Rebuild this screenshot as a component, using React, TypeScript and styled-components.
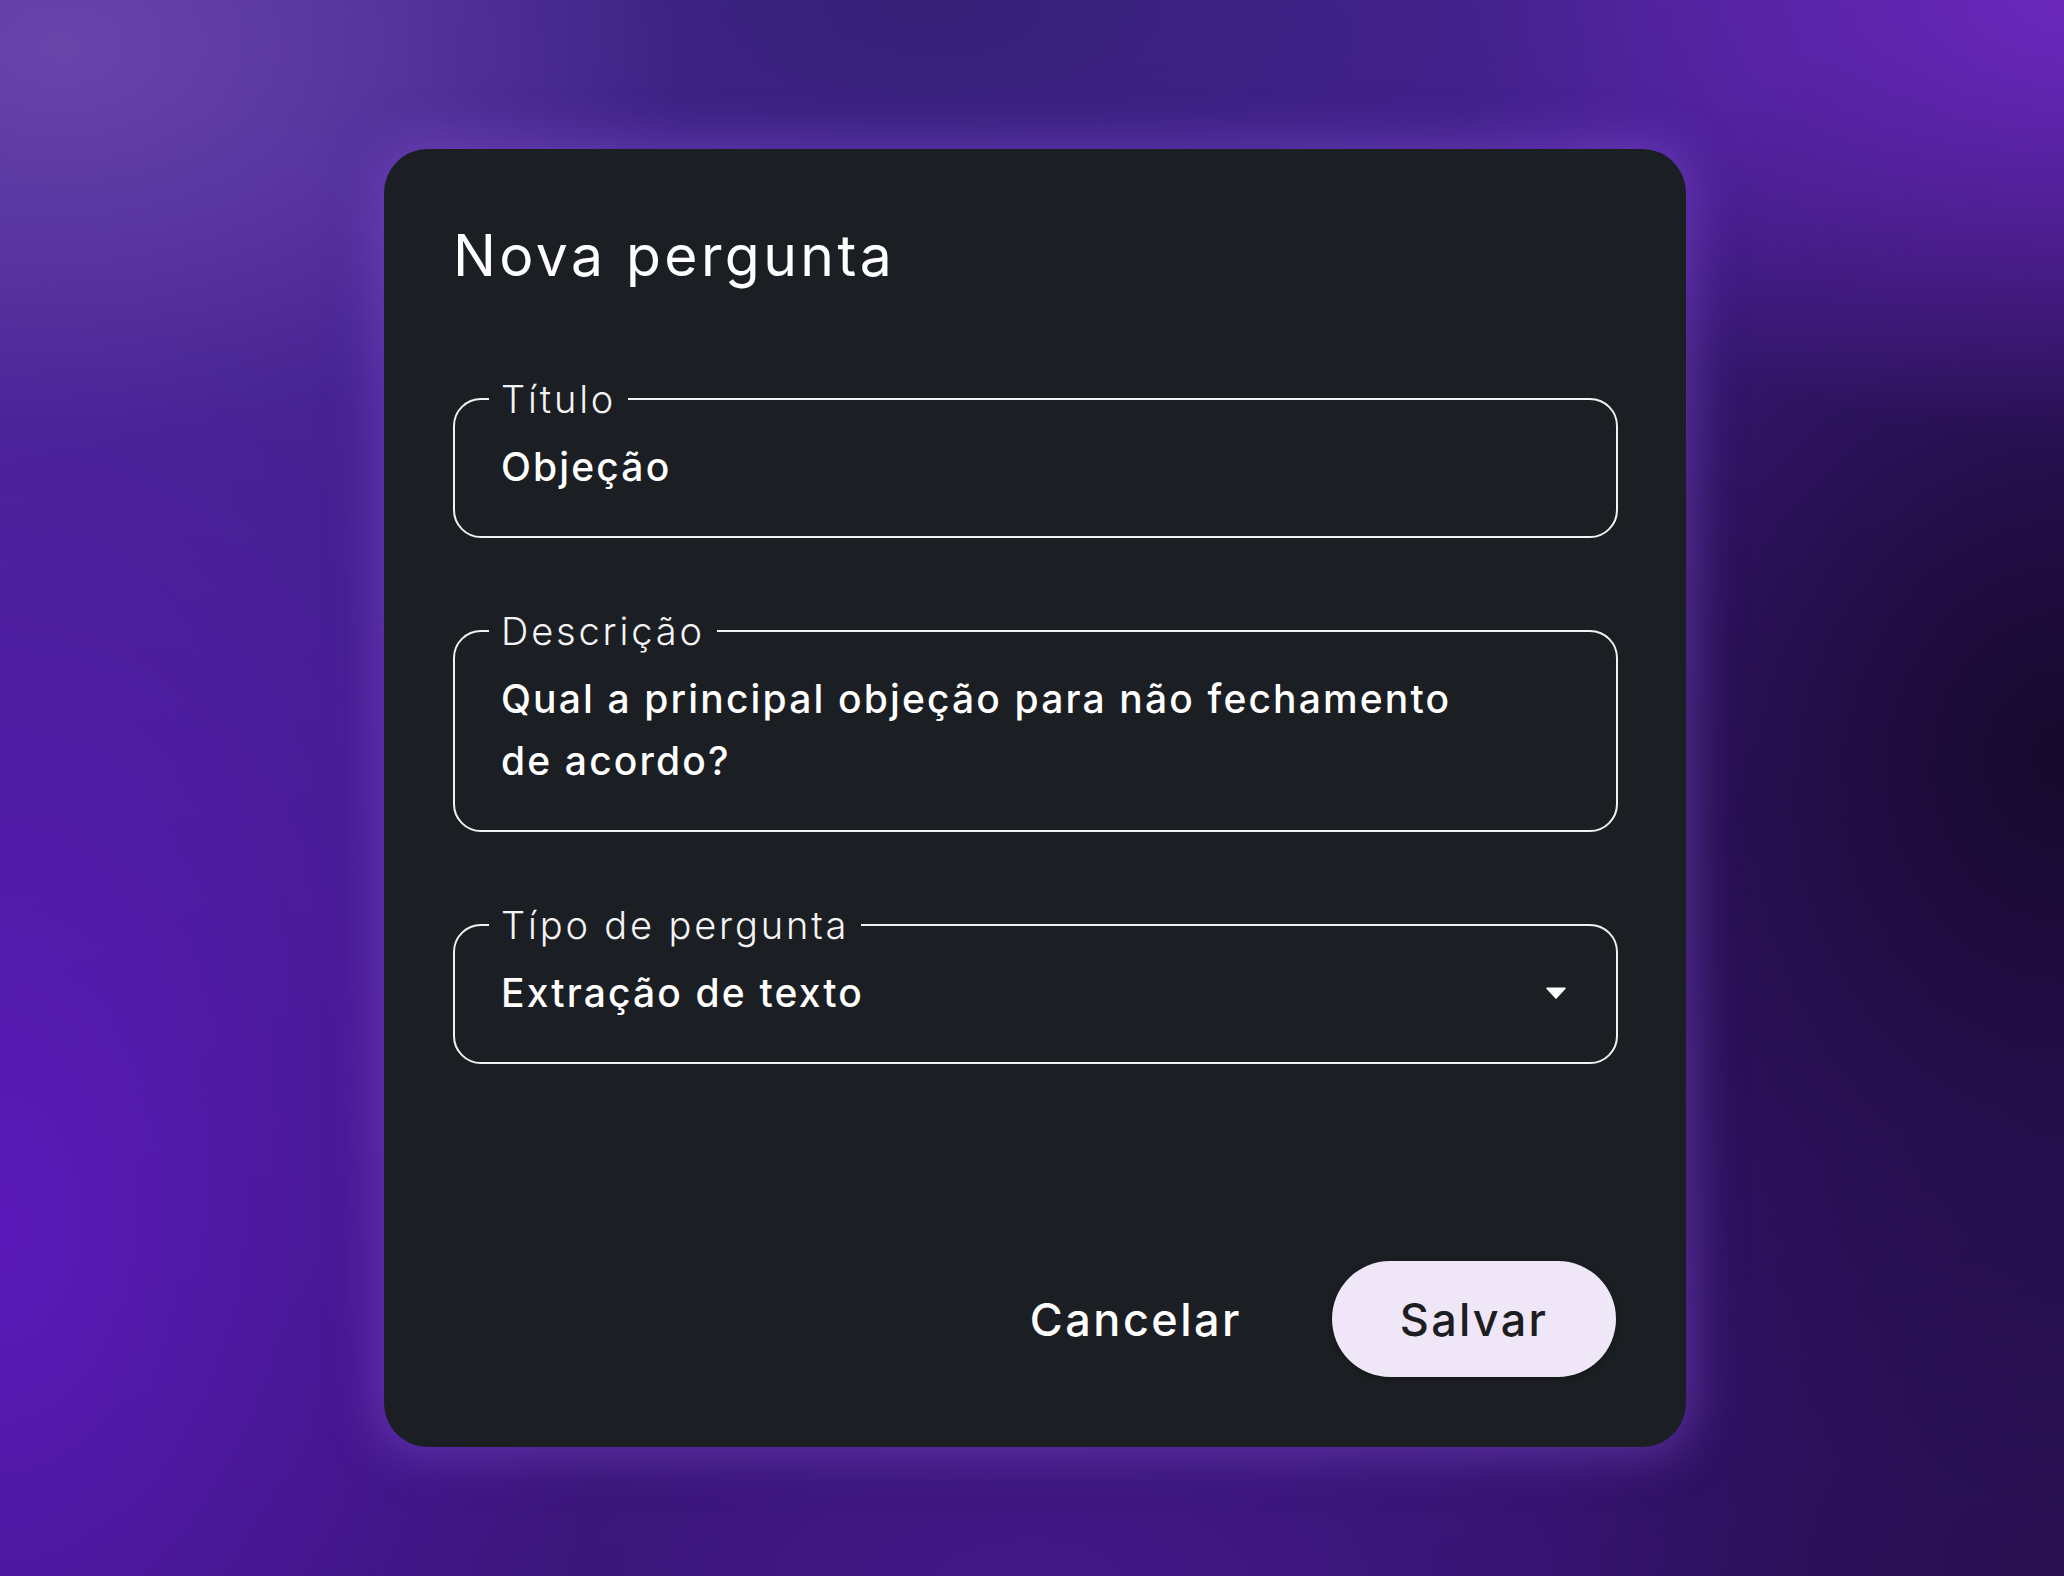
import React from 'react';
import styled, { createGlobalStyle } from 'styled-components';

const GlobalStyle = createGlobalStyle`
  html, body {
    margin: 0;
    padding: 0;
  }
  body {
    font-family: Inter, "Noto Sans", sans-serif;
    background: #3f1d88;
    -webkit-font-smoothing: antialiased;
  }
  * {
    box-sizing: border-box;
  }
`;

const Backdrop = styled.div`
  min-height: 100vh;
  display: flex;
  justify-content: center;
  align-items: flex-start;
  padding: 149px 0 0 6px;
  background:
    radial-gradient(ellipse 30% 25% at 3% 3%, rgba(104, 70, 170, 0.95) 0%, rgba(104, 70, 170, 0) 100%),
    radial-gradient(ellipse 35% 22% at 45% 0%, rgba(52, 32, 118, 0.95) 0%, rgba(52, 32, 118, 0) 100%),
    radial-gradient(ellipse 30% 28% at 100% 0%, rgba(108, 40, 190, 0.95) 0%, rgba(108, 40, 190, 0) 100%),
    radial-gradient(ellipse 32% 48% at 100% 48%, rgba(22, 9, 44, 1) 0%, rgba(22, 9, 44, 0) 100%),
    radial-gradient(ellipse 25% 30% at 100% 100%, rgba(40, 16, 80, 1) 0%, rgba(40, 16, 80, 0) 100%),
    radial-gradient(ellipse 30% 60% at 0% 78%, rgba(92, 26, 190, 0.95) 0%, rgba(92, 26, 190, 0) 100%),
    radial-gradient(ellipse 40% 20% at 50% 100%, rgba(66, 24, 136, 1) 0%, rgba(66, 24, 136, 0) 100%),
    linear-gradient(160deg, #4e2a9c 0%, #421e8c 35%, #3a1678 60%, #2d1060 100%);
`;

const Dialog = styled.section`
  width: 1302px;
  height: 1298px;
  display: flex;
  flex-direction: column;
  padding: 73px 68px 70px 69px;
  background: #1b1e22;
  border-radius: 44px;
  box-shadow: 0 0 46px 8px rgba(126, 78, 206, 0.5);
  color: #ffffff;
`;

const Heading = styled.h2`
  margin: 0 0 90px;
  font-size: 57px;
  line-height: 68px;
  font-weight: 400;
  letter-spacing: 0.06em;
  color: #ffffff;
`;

const Fields = styled.div`
  display: flex;
  flex-direction: column;
  gap: 74px;
`;

const Field = styled.fieldset`
  margin: 0;
  min-width: 0;
  padding: 18px 46px 38px;
  border: 2px solid #f1f1f3;
  border-radius: 28px;
`;

const Label = styled.legend`
  margin-left: -12px;
  padding: 0 12px;
  font-size: 38px;
  line-height: 38px;
  font-weight: 300;
  letter-spacing: 0.075em;
  color: #f4f4f6;
`;

const Value = styled.div<{ $wrap?: number }>`
  display: flex;
  align-items: center;
  justify-content: space-between;
  max-width: ${(p) => (p.$wrap ? `${p.$wrap}px` : 'none')};
  font-size: 39px;
  line-height: 62px;
  font-weight: 500;
  letter-spacing: 0.055em;
  color: #ffffff;
`;

const Caret = styled.svg`
  flex: none;
  margin-right: 4px;
`;

const Actions = styled.div`
  margin-top: auto;
  display: flex;
  justify-content: flex-end;
  align-items: center;
  gap: 66px;
`;

const TextButton = styled.button`
  border: none;
  background: transparent;
  padding: 0 24px;
  height: 116px;
  font-family: inherit;
  font-size: 45px;
  font-weight: 500;
  letter-spacing: 0.055em;
  color: #ffffff;
  cursor: pointer;
`;

const FilledButton = styled.button`
  width: 284px;
  height: 116px;
  margin-right: 2px;
  border: none;
  border-radius: 58px;
  background: #efe6f8;
  font-family: inherit;
  font-size: 45px;
  font-weight: 500;
  letter-spacing: 0.05em;
  color: #1c1e22;
  cursor: pointer;
  box-shadow: 0 2px 6px rgba(0, 0, 0, 0.25);
`;

const App = () => {
  return (
    <>
      <GlobalStyle />
      <Backdrop>
        <Dialog>
          <Heading>Nova pergunta</Heading>
          <Fields>
            <Field>
              <Label>Título</Label>
              <Value>Objeção</Value>
            </Field>
            <Field>
              <Label>Descrição</Label>
              <Value $wrap={1000}>Qual a principal objeção para não fechamento de acordo?</Value>
            </Field>
            <Field>
              <Label>Típo de pergunta</Label>
              <Value>
                Extração de texto
                <Caret width="20" height="12" viewBox="0 0 20 12">
                  <path d="M1 0.5h18a0.8 0.8 0 0 1 0.6 1.3L10.6 11.4a0.8 0.8 0 0 1-1.2 0L0.4 1.8A0.8 0.8 0 0 1 1 0.5z" fill="#ffffff" />
                </Caret>
              </Value>
            </Field>
          </Fields>
          <Actions>
            <TextButton>Cancelar</TextButton>
            <FilledButton>Salvar</FilledButton>
          </Actions>
        </Dialog>
      </Backdrop>
    </>
  );
};

export default App;
